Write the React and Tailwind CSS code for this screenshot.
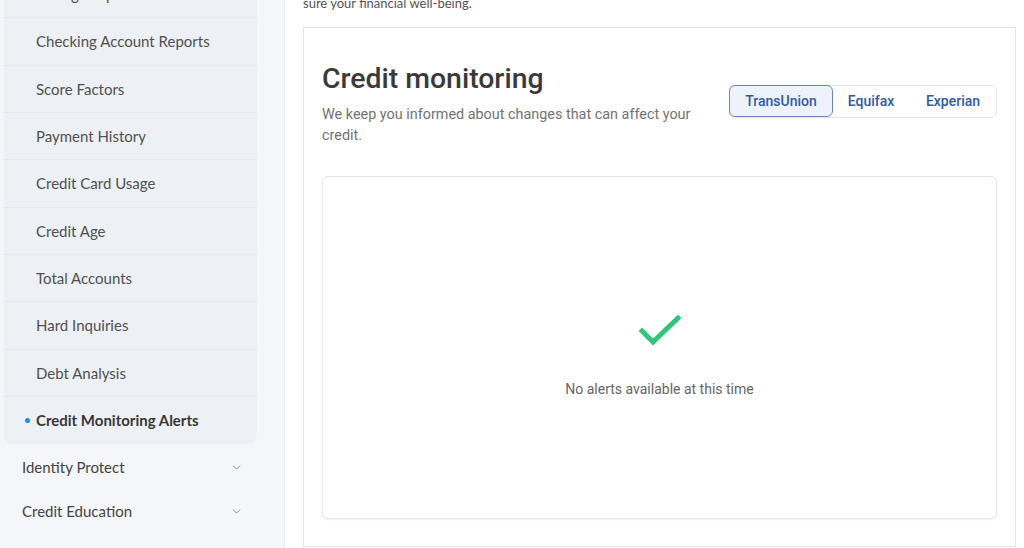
import { ChevronDown } from 'lucide-react';

const subItems = [
  'Savings Reports',
  'Checking Account Reports',
  'Score Factors',
  'Payment History',
  'Credit Card Usage',
  'Credit Age',
  'Total Accounts',
  'Hard Inquiries',
  'Debt Analysis',
];

const bureaus = ['TransUnion', 'Equifax', 'Experian'];

const App = () => {
  return (
    <div className="flex w-[1024px] h-[548px] overflow-hidden bg-white">
      {/* Sidebar */}
      <aside className="w-[285px] shrink-0 bg-[#f4f6f9] border-r border-[#e6e9ee] font-['Lato',sans-serif]">
        <div className="ml-[4px] w-[253px] mt-[-29px] bg-[#edf1f5] rounded-b-lg">
          {subItems.map(item => (
            <div
              key={item}
              className="h-[47.33px] flex items-center pl-[32px] border-b border-[#e4e8ee] text-[15px] text-[#505050]"
            >
              {item}
            </div>
          ))}
          <div className="h-[47px] flex items-center pl-[21px] gap-[6px] text-[15px] font-bold text-[#383838]">
            <span className="w-[5px] h-[5px] rounded-full bg-[#1a8cff]"></span>
            Credit Monitoring Alerts
          </div>
        </div>
        <div className="mt-[1px]">
          {['Identity Protect', 'Credit Education'].map(label => (
            <div
              key={label}
              className="h-[44.5px] flex items-center justify-between pl-[22px] pr-[41px] text-[15px] text-[#444]"
            >
              {label}
              <ChevronDown size={13} strokeWidth={1.5} className="text-[#777]" />
            </div>
          ))}
        </div>
      </aside>

      {/* Main content */}
      <main className="flex-1 pl-[18px] pr-[8px] font-['Roboto',sans-serif]">
        <p className="mt-[-7px] h-[34px] text-[13px] leading-[20px] text-[#555] font-['Lato',sans-serif]">
          sure your financial well-being.
        </p>
        <div className="border border-[#e3e3e3] h-[520px] px-[18px] pt-[34px]">
          <div className="flex justify-between items-start">
            <div>
              <h2 className="text-[28.4px] leading-[34px] font-medium text-[#3a3a3a]">Credit monitoring</h2>
              <p className="mt-[8px] w-[375px] text-[14.4px] leading-[21px] text-[#737373]">
                We keep you informed about changes that can affect your credit.
              </p>
            </div>
            <div className="mt-[23px] flex border border-[#e4e7eb] rounded-md">
              {bureaus.map((b, i) => (
                <button
                  key={b}
                  className={`h-[31px] text-[14px] font-medium text-[#2f5aa8] rounded-md ${
                    i === 0
                      ? 'w-[104px] -m-px h-[32px] bg-[#eef3fb] border border-[#6b87bd]'
                      : i === 1 ? 'w-[78px]' : 'w-[86px]'
                  }`}
                >
                  {b}
                </button>
              ))}
            </div>
          </div>

          <div className="mt-[30px] h-[343px] border border-[#e5e7eb] rounded-md shadow-[0_1px_2px_rgba(0,0,0,0.06)] flex flex-col items-center justify-center pt-[19px]">
            <svg width="42" height="32" viewBox="0 0 42 32" fill="none">
              <path d="M3 16 L14 27 L39 3" stroke="#2ec77a" strokeWidth="5" strokeLinecap="square" />
            </svg>
            <p className="mt-[32px] text-[14px] text-[#666]">No alerts available at this time</p>
          </div>
        </div>
      </main>
    </div>
  );
};

export default App;
